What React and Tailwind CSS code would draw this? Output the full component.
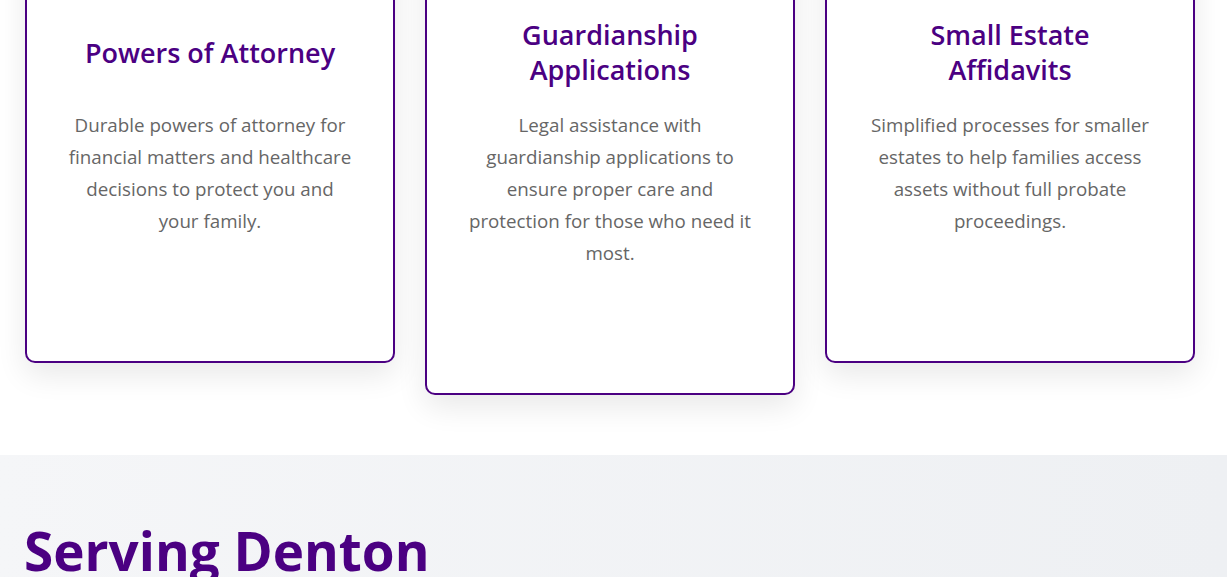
const services = [
  {
    title: "Powers of Attorney",
    text: "Durable powers of attorney for financial matters and healthcare decisions to protect you and your family.",
  },
  {
    title: "Guardianship Applications",
    text: "Legal assistance with guardianship applications to ensure proper care and protection for those who need it most.",
  },
  {
    title: "Small Estate Affidavits",
    text: "Simplified processes for smaller estates to help families access assets without full probate proceedings.",
  },
];

function ServiceCard({ title, text }) {
  return (
    <div className="bg-white border-2 border-[#4b0082] rounded-[10px] px-[38px] pt-[77px] pb-[124px] shadow-[0_12px_30px_rgba(0,0,0,0.09)] text-center">
      {/* title area keeps one- and two-line titles aligned */}
      <div className="h-[70px] flex items-center justify-center">
        <h3 className="max-w-[265px] text-[27px] leading-[35px] font-semibold text-[#4b0082]">{title}</h3>
      </div>
      <p className="mt-[22px] text-[18.75px] leading-[32px] text-[#666666]">{text}</p>
    </div>
  );
}

export default function App() {
  return (
    <div className="bg-white" style={{ fontFamily: '"Open Sans", "Noto Sans", sans-serif' }}>
      <section className="-mt-[62px] pl-[25px] pr-[32px] pb-[60px]">
        <div className="grid grid-cols-3 gap-[30px] items-start">
          {services.map((s) => (
            <ServiceCard key={s.title} {...s} />
          ))}
        </div>
      </section>

      <section className="bg-gradient-to-r from-[#f5f6f8] to-[#eef0f3] pt-[64px] pb-[80px] px-[24px]">
        <h2 className="text-[53px] leading-[1.2] font-bold text-[#4b0082]">Serving Denton</h2>
      </section>
    </div>
  );
}
